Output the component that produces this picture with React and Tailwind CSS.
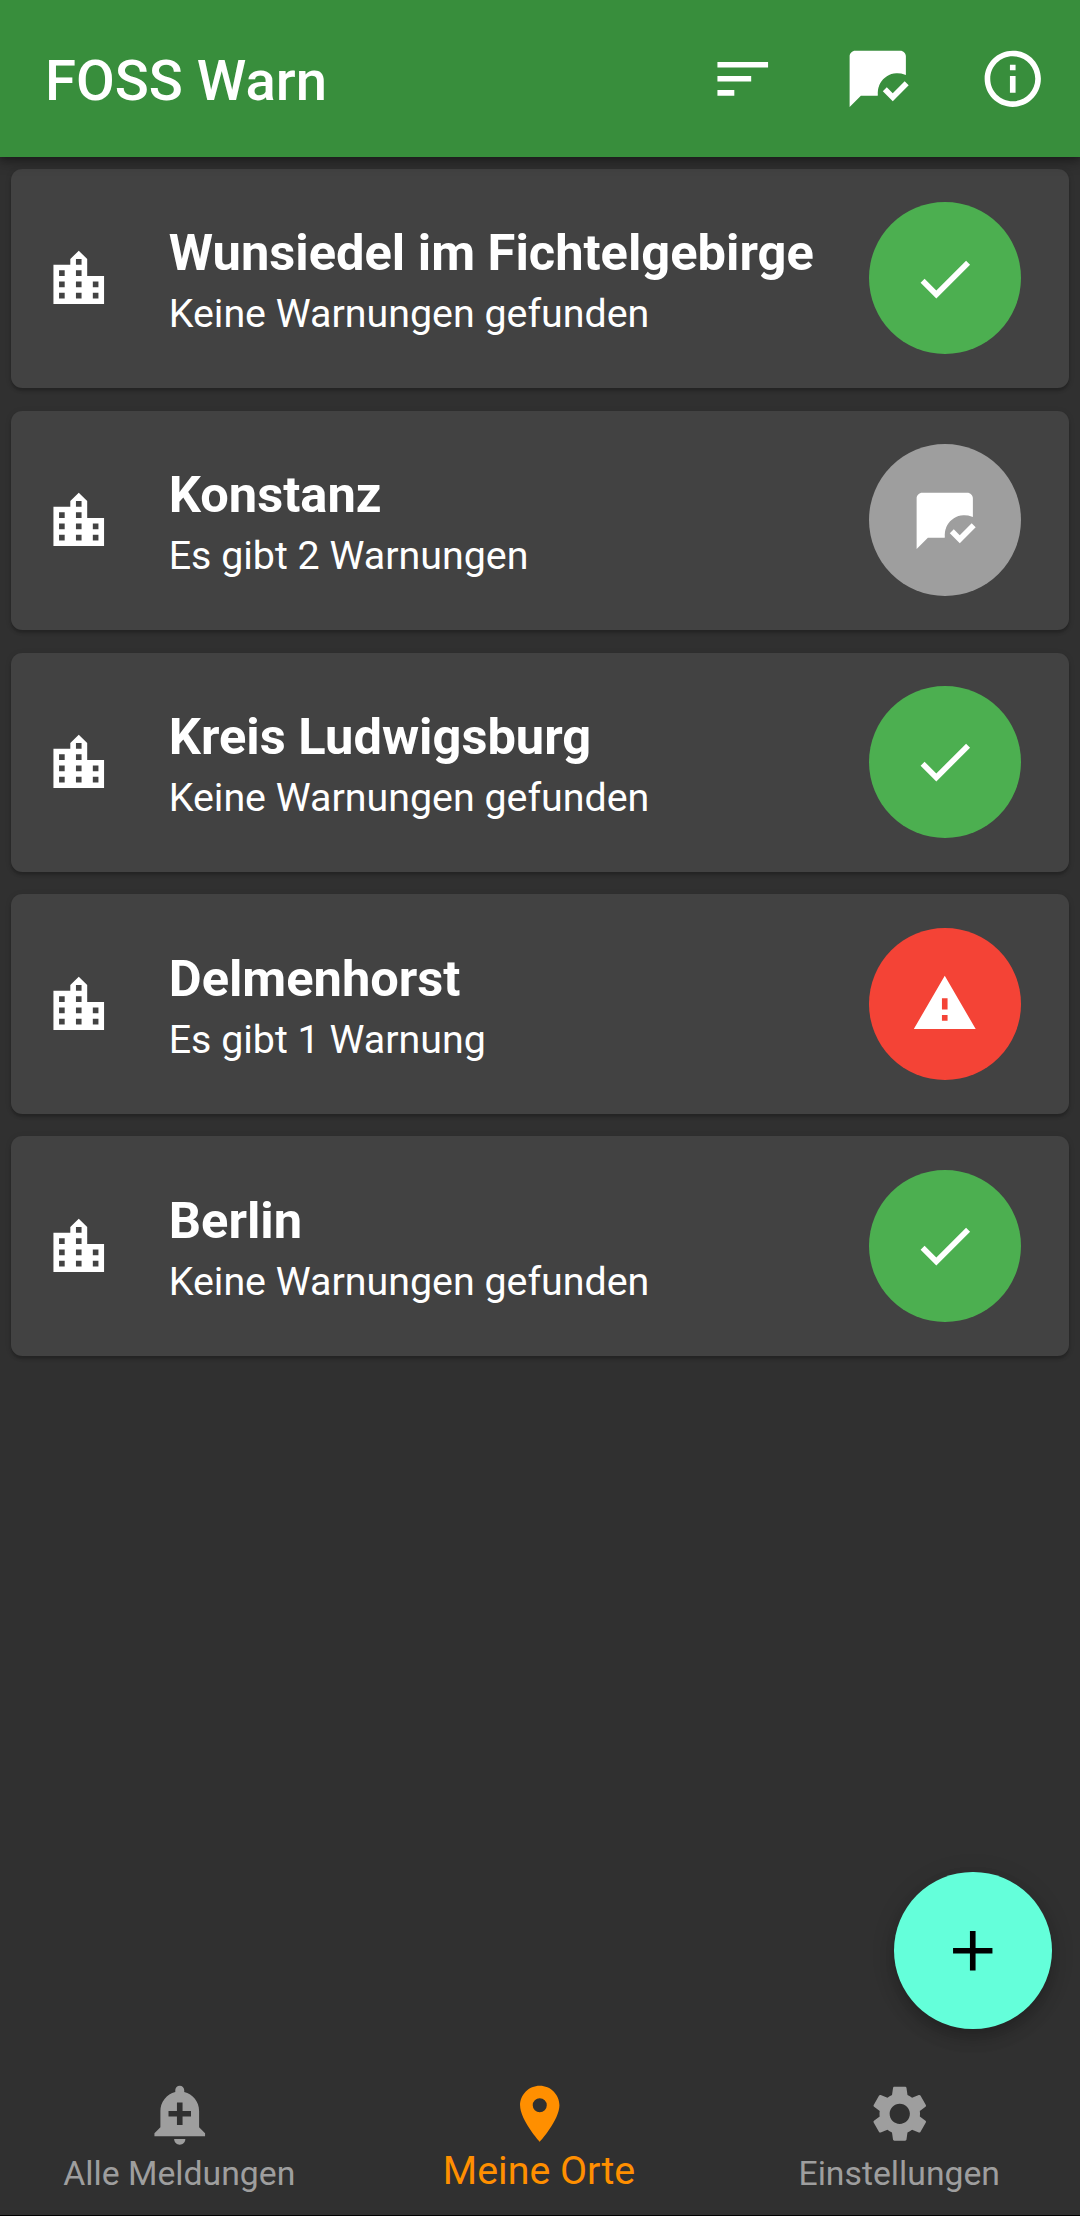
import {
  MdAdd,
  MdAddAlert,
  MdCheck,
  MdInfoOutline,
  MdLocationCity,
  MdMarkChatRead,
  MdPlace,
  MdSettings,
  MdSort,
  MdWarning,
} from "react-icons/md";

const places = [
  { name: "Wunsiedel im Fichtelgebirge", text: "Keine Warnungen gefunden", status: "ok" },
  { name: "Konstanz", text: "Es gibt 2 Warnungen", status: "read" },
  { name: "Kreis Ludwigsburg", text: "Keine Warnungen gefunden", status: "ok" },
  { name: "Delmenhorst", text: "Es gibt 1 Warnung", status: "warning" },
  { name: "Berlin", text: "Keine Warnungen gefunden", status: "ok" },
];

const statuses = {
  ok: { Icon: MdCheck, color: "bg-[#4caf50]" },
  read: { Icon: MdMarkChatRead, color: "bg-[#9e9e9e]" },
  warning: { Icon: MdWarning, color: "bg-[#f44336]" },
};

function BarButton({ Icon, label }) {
  return (
    <button aria-label={label} className="flex size-[135px] items-center justify-center">
      <Icon className="size-[67.5px]" />
    </button>
  );
}

function PlaceCard({ name, text, status }) {
  const { Icon, color } = statuses[status];
  return (
    <li className="flex h-[219.375px] items-center rounded-[11.25px] bg-[#424242] pr-[48px] pl-[33.75px] shadow-[0_3px_3px_rgba(0,0,0,0.2),0_1px_6px_rgba(0,0,0,0.1)]">
      <MdLocationCity className="mt-[1px] size-[67.5px] shrink-0" />
      <div className="ml-[56.25px] flex grow flex-col gap-[9px] pt-[4px] whitespace-nowrap">
        <h2 className="text-[50.625px] leading-[59px] font-bold">{name}</h2>
        <p className="text-[39.375px] leading-[46px]">{text}</p>
      </div>
      <button className={`flex size-[152px] shrink-0 items-center justify-center rounded-full ${color}`}>
        <Icon className="size-[67.5px]" />
      </button>
    </li>
  );
}

function NavItem({ Icon, label, active }) {
  return (
    <a className={`flex flex-1 flex-col items-center pt-[28.25px] ${active ? "text-[#ff8f00]" : "text-[#9e9e9e]"}`}>
      <Icon className="size-[67.5px]" />
      <span
        className={
          active
            ? "pr-[2px] text-[39.375px] leading-[45.5px] whitespace-nowrap"
            : "mt-[5.75px] pr-[1.5px] text-[33.75px] leading-[40px] whitespace-nowrap"
        }
      >
        {label}
      </span>
    </a>
  );
}

export default function App() {
  return (
    <div className="flex h-[2216px] w-[1080px] flex-col overflow-hidden border-b border-black bg-[#303030] font-[Roboto,sans-serif] text-white">
      <header className="relative z-10 mb-[0.5px] flex h-[157px] shrink-0 items-center bg-[#388e3c] pl-[45px] shadow-[0_5px_12px_rgba(0,0,0,0.3),0_2px_6px_rgba(0,0,0,0.2)]">
        <h1 className="grow pt-[5px] text-[56.25px] leading-[66px] font-medium">FOSS Warn</h1>
        <BarButton Icon={MdSort} label="Sortieren" />
        <BarButton Icon={MdMarkChatRead} label="Alle als gelesen markieren" />
        <BarButton Icon={MdInfoOutline} label="Info" />
      </header>

      <main className="relative flex grow flex-col">
        <ul className="flex flex-col gap-[22.5px] p-[11.25px]">
          {places.map((place) => (
            <PlaceCard key={place.name} {...place} />
          ))}
        </ul>
        <button
          aria-label="Ort hinzufügen"
          className="absolute right-[28.25px] bottom-[23px] flex size-[157.5px] items-center justify-center rounded-full bg-[#64ffda] text-black shadow-[0_9px_15px_rgba(0,0,0,0.2),0_3px_26px_rgba(0,0,0,0.1)]"
        >
          <MdAdd className="size-[67.5px]" />
        </button>
      </main>

      <nav className="flex h-[163px] shrink-0 bg-[#303030]">
        <NavItem Icon={MdAddAlert} label="Alle Meldungen" />
        <NavItem Icon={MdPlace} label="Meine Orte" active />
        <NavItem Icon={MdSettings} label="Einstellungen" />
      </nav>
    </div>
  );
}
